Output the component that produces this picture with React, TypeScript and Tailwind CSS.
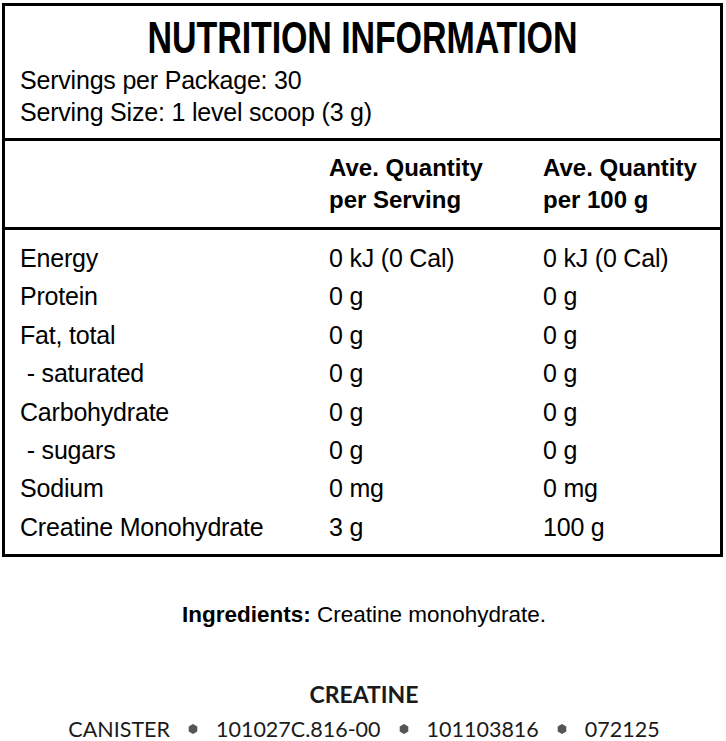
import React from 'react';

const rows: [string, string, string][] = [
  ['Energy', '0 kJ (0 Cal)', '0 kJ (0 Cal)'],
  ['Protein', '0 g', '0 g'],
  ['Fat, total', '0 g', '0 g'],
  ['\u00a0- saturated', '0 g', '0 g'],
  ['Carbohydrate', '0 g', '0 g'],
  ['\u00a0- sugars', '0 g', '0 g'],
  ['Sodium', '0 mg', '0 mg'],
  ['Creatine Monohydrate', '3 g', '100 g'],
];

const sans = "font-['Liberation_Sans',Arial,sans-serif]";

const Dot = () => (
  <svg width="10" height="10" viewBox="0 0 10 10" className="mx-[18px]">
    <polygon points="5,0 9.3,2.5 9.3,7.5 5,10 0.7,7.5 0.7,2.5" fill="#555" />
  </svg>
);

export default function App() {
  return (
    <div className="w-[726px] h-[741px] bg-white pt-[3px] pl-[2px] text-black overflow-hidden">
      {/* Panel */}
      <div className={`w-[721px] border-[3px] border-black ${sans}`}>
        <div className="pt-[8px] pb-[10px] border-b-[3px] border-black">
          <h1 className="text-center font-bold text-[34px] leading-[46px] tracking-[-0.1px] scale-y-[1.3]">NUTRITION INFORMATION</h1>
          <div className="mt-[4px] pl-[15px] text-[25px] leading-[32px] tracking-[-0.2px]">
            <p>Servings per Package: 30</p>
            <p>Serving Size: 1 level scoop (3 g)</p>
          </div>
        </div>

        <div className="grid grid-cols-[309px_214px_1fr] pl-[15px] pt-[11px] pb-[11px] border-b-[3px] border-black font-bold text-[24px] leading-[32px]">
          <div />
          <div>Ave. Quantity<br />per Serving</div>
          <div>Ave. Quantity<br />per 100 g</div>
        </div>

        <div className="grid grid-cols-[309px_214px_1fr] pl-[15px] pt-[9px] pb-[8px] text-[25px] leading-[38.4px] tracking-[-0.2px]">
          {rows.map(([name, serv, hundred]) => (
            <React.Fragment key={name}>
              <div className="whitespace-pre">{name}</div>
              <div>{serv}</div>
              <div>{hundred}</div>
            </React.Fragment>
          ))}
        </div>
      </div>

      {/* Ingredients */}
      <p className={`mt-[42px] text-center text-[22.5px] leading-[32px] ${sans}`}>
        <span className="font-bold">Ingredients:</span> Creatine monohydrate.
      </p>

      {/* Footer codes */}
      <div className="mt-[50px] flex flex-col items-center font-['Lato',sans-serif] text-[#1a1a1a]">
        <p className="font-bold text-[23px] leading-[26px]">CREATINE</p>
        <div className="mt-[8px] flex items-center text-[21.5px] leading-[28px]">
          <span>CANISTER</span>
          <Dot />
          <span>101027C.816-00</span>
          <Dot />
          <span>101103816</span>
          <Dot />
          <span>072125</span>
        </div>
      </div>
    </div>
  );
}
